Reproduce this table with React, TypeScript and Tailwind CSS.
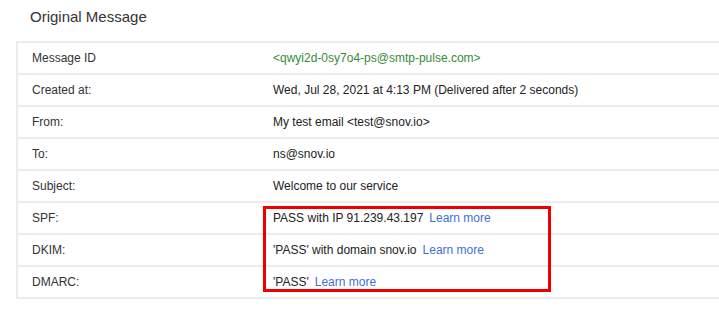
const ROWS: { label: string; value: React.ReactNode }[] = [
  {
    label: "Message ID",
    value: <span className="text-[#3a8a3a]">&lt;qwyi2d-0sy7o4-ps@smtp-pulse.com&gt;</span>,
  },
  { label: "Created at:", value: "Wed, Jul 28, 2021 at 4:13 PM (Delivered after 2 seconds)" },
  { label: "From:", value: "My test email <test@snov.io>" },
  { label: "To:", value: "ns@snov.io" },
  { label: "Subject:", value: "Welcome to our service" },
  { label: "SPF:", value: <Auth text="PASS with IP 91.239.43.197" /> },
  { label: "DKIM:", value: <Auth text="'PASS' with domain snov.io" /> },
  { label: "DMARC:", value: <Auth text="'PASS'" /> },
];

function Auth({ text }: { text: string }) {
  return (
    <>
      {text}
      <a className="ml-[6px] text-[#3f6fd8]">Learn more</a>
    </>
  );
}

export default function App() {
  return (
    <div className="h-[320px] w-[719px] overflow-hidden bg-white font-['Liberation_Sans',Arial,sans-serif]">
      <h2 className="pl-[30px] pt-[7px] text-[15px] leading-[20px] text-[#333]">Original Message</h2>
      <div className="relative ml-[16px] mt-[14px] border-y-2 border-l-2 border-[#ececec]">
        {ROWS.map((row, i) => (
          <div
            key={row.label}
            className={`flex h-[30px] items-center text-[12px] text-[#222] ${
              i > 0 ? "border-t-2 border-[#ececec]" : ""
            } box-content`}
          >
            <div className="w-[255px] shrink-0 pl-[14px] text-[#333]">{row.label}</div>
            <div className="whitespace-nowrap">{row.value}</div>
          </div>
        ))}
        <div className="pointer-events-none absolute left-[245px] top-[163px] h-[86px] w-[288px] border-[3px] border-[#ee0000]" />
      </div>
    </div>
  );
}
